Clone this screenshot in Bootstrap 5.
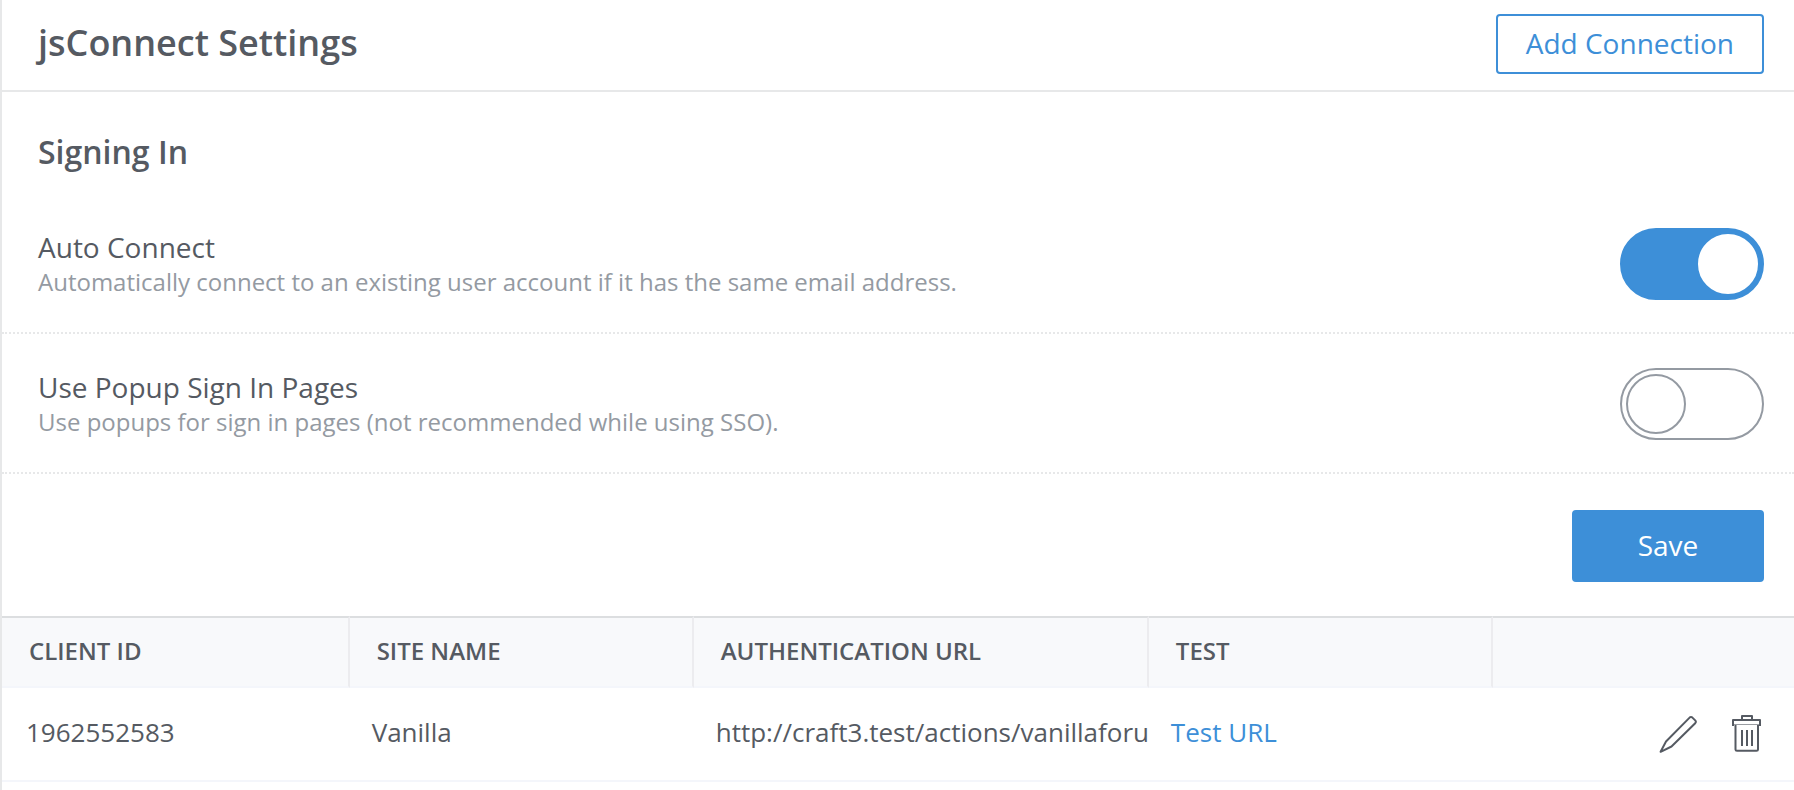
<!DOCTYPE html>
<html lang="en">
<head>
<meta charset="utf-8">
<meta name="viewport" content="width=device-width, initial-scale=1">
<title>jsConnect Settings</title>
<link href="https://cdn.jsdelivr.net/npm/bootstrap@5.3.0/dist/css/bootstrap.min.css" rel="stylesheet">
<style>
  :root { --ink: #555a62; --muted: #949aa2; --brand: #3d8fd8; --line: #e7e8e9; --soft: #f4f6fb; }
  body { font-family: "Open Sans", sans-serif; font-size: 28px; line-height: 36px; color: var(--ink); background: #fff; }
  .panel { border-left: 2px solid var(--line); }
  .inset { padding-left: 36px; padding-right: 30px; }
  .page-head { padding-top: 14px; padding-bottom: 16px; border-bottom: 2px solid var(--line); }
  .page-head h1 { font-size: 36px; line-height: 48px; font-weight: 600; padding-bottom: 2px; }
  .section-title { font-size: 32px; line-height: 44px; font-weight: 600; padding-top: 38px; margin-bottom: 20px; }
  .btn { --bs-btn-font-size: 28px; --bs-btn-line-height: 36px; --bs-btn-border-width: 2px; --bs-btn-border-radius: 4px;
         --bs-btn-border-color: var(--brand); --bs-btn-hover-border-color: var(--brand); --bs-btn-active-border-color: var(--brand); }
  .btn-add { --bs-btn-color: var(--brand); --bs-btn-hover-color: #fff; --bs-btn-hover-bg: var(--brand); --bs-btn-active-bg: var(--brand); padding: 9px 28px 11px; }
  .btn-save { --bs-btn-color: #fff; --bs-btn-bg: var(--brand); --bs-btn-hover-color: #fff; --bs-btn-hover-bg: #2f7fc6; --bs-btn-active-bg: #2f7fc6; --bs-btn-active-color: #fff; min-width: 192px; padding: 15px 28px 17px; }
  .setting { padding-top: 34px; padding-bottom: 32px; border-bottom: 2px dotted var(--line); }
  .setting-note { font-size: 24px; line-height: 34px; color: var(--muted); }
  .toggle.form-check-input { width: 144px; height: 72px; margin: 0; padding: 4px; float: none; flex-shrink: 0;
    border: 2px solid var(--muted); border-radius: 36px; background: #fff; cursor: pointer; }
  .toggle::before { content: ""; display: block; width: 60px; height: 60px; border: 2px solid var(--muted); border-radius: 50%; background: #fff; }
  .toggle.form-check-input:checked { background: var(--brand); border-color: var(--brand); }
  .toggle:checked::before { margin-left: auto; border-color: #fff; }
  .save-row { padding-top: 36px; padding-bottom: 34px; }
  .connections { table-layout: fixed; border-collapse: separate; border-spacing: 0; color: var(--ink); }
  .connections > thead > tr > th { font-size: 24px; line-height: 32px; font-weight: 600; padding: 17px 0 19px 27px; text-transform: uppercase;
    background: #f8f9fb; border: 0 solid var(--soft); border-top: 2px solid #dcdee0; border-bottom-width: 2px; }
  .connections > thead > tr > th:not(:last-child) { border-right: 2px solid #ececef; }
  .connections > tbody > tr > td { font-size: 26px; line-height: 36px; padding: 26px 0 30px 22px; border-bottom: 2px solid var(--soft); white-space: nowrap; overflow: hidden; color: var(--ink); }
  .connections > tbody > tr > td:first-child { padding-left: 24px; }
  .connections > tbody > tr > td.tools { padding: 0 32px 0 0; vertical-align: middle; }
  .connections a { color: var(--brand); text-decoration: none; }
  .tools button { border: 0; background: none; padding: 0; color: var(--ink); line-height: 0; }
  .tools svg { fill: none; stroke: currentColor; stroke-width: 2; stroke-linejoin: round; display: block; }
</style>
<script src="https://cdn.jsdelivr.net/npm/bootstrap@5.3.0/dist/js/bootstrap.bundle.min.js"></script>
</head>
<body>
<main class="panel min-vh-100">
  <header class="page-head inset d-flex justify-content-between align-items-center">
    <h1 class="m-0">jsConnect Settings</h1>
    <button type="button" class="btn btn-add">Add Connection</button>
  </header>

  <form>
    <h2 class="section-title inset">Signing In</h2>
    <div class="setting inset d-flex justify-content-between align-items-center gap-4">
      <div>
        <label class="d-block" for="autoConnect">Auto Connect</label>
        <div class="setting-note" id="autoNote">Automatically connect to an existing user account if it has the same email address.</div>
      </div>
      <input class="form-check-input toggle" type="checkbox" role="switch" id="autoConnect" aria-describedby="autoNote" checked>
    </div>
    <div class="setting inset d-flex justify-content-between align-items-center gap-4">
      <div>
        <label class="d-block" for="usePopup">Use Popup Sign In Pages</label>
        <div class="setting-note" id="popupNote">Use popups for sign in pages (not recommended while using SSO).</div>
      </div>
      <input class="form-check-input toggle" type="checkbox" role="switch" id="usePopup" aria-describedby="popupNote">
    </div>
    <div class="save-row inset d-flex justify-content-end">
      <button type="submit" class="btn btn-save">Save</button>
    </div>
  </form>

  <table class="table connections mb-0">
    <colgroup>
      <col style="width:19.4%"><col style="width:19.2%"><col style="width:25.4%"><col style="width:19.2%"><col>
    </colgroup>
    <thead>
      <tr>
        <th scope="col">Client ID</th>
        <th scope="col">Site Name</th>
        <th scope="col">Authentication URL</th>
        <th scope="col">Test</th>
        <th scope="col" aria-label="Options"></th>
      </tr>
    </thead>
    <tbody>
      <tr>
        <td>1962552583</td>
        <td>Vanilla</td>
        <td>http://craft3.test/actions/vanillaforu</td>
        <td><a href="#">Test URL</a></td>
        <td class="tools">
          <div class="d-flex justify-content-end gap-4">
            <button type="button" aria-label="Edit">
              <svg width="48" height="40" viewBox="0 0 48 40"><path d="M2.600 37.800 8 27.500 31.600 3.600q1.400-1.300 2.800 0l2.800 2.800q1.400 1.400 0 2.800L13.500 32.500Z"/></svg>
            </button>
            <button type="button" aria-label="Delete">
              <svg width="32" height="40" viewBox="0 0 32 40"><path d="M12 6V2h10v4M3 12V6h27v6M5.500 11v24.500q0 1.300 1.500 1.300h19.500q1.500 0 1.500-1.300V11M12 16v16M17 16v16M22 16v16"/><path d="M4 10.500h25" stroke-width="1" opacity=".6"/></svg>
            </button>
          </div>
        </td>
      </tr>
    </tbody>
  </table>
</main>
</body>
</html>
